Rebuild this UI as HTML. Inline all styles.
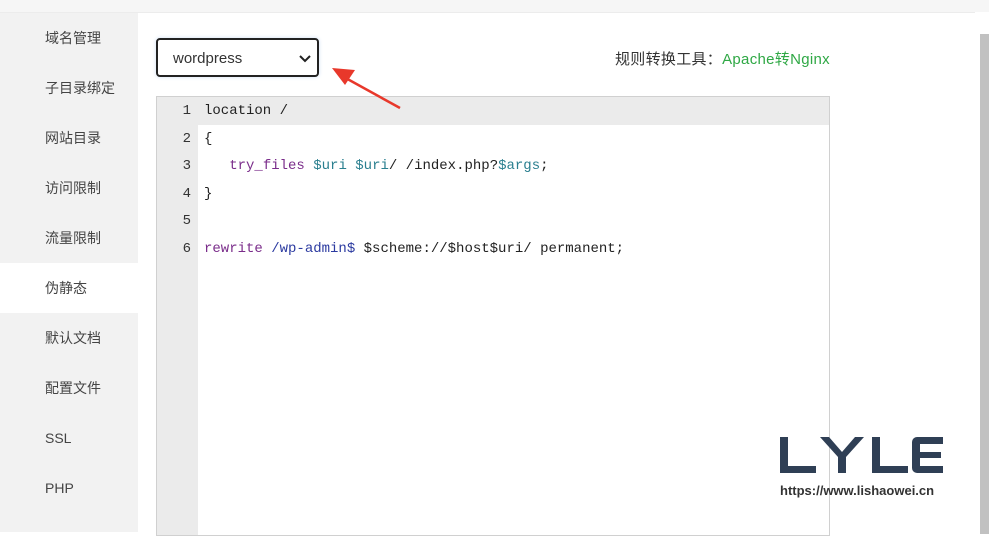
<!DOCTYPE html>
<html><head><meta charset="utf-8"><style>
body{margin:0;width:989px;height:532px;overflow:hidden;background:#fff;font-family:"Liberation Sans","Noto Sans CJK SC",sans-serif;position:relative}
.top{position:absolute;left:0;top:0;width:989px;height:12px;background:#f6f6f6;border-bottom:1px solid #ececec}
.side{position:absolute;left:0;top:13px;width:138px;height:519px;background:#f2f2f2}
.side div{height:50px;line-height:51px;padding-left:45px;font-size:14px;color:#444}
.side .act{background:#fff}
.sel{position:absolute;left:156px;top:38px;width:163px;height:39px;border:2px solid #222;border-radius:4px;box-sizing:border-box;box-shadow:0 0 4px #cfe0f5;font-size:15px;color:#333;line-height:38px;padding-left:15px}
.sel svg{position:absolute;right:6px;top:15px}
.tool{position:absolute;left:615px;top:48px;font-size:15px;color:#333;letter-spacing:0.3px}
.tool span{color:#2fa845}
.ed{position:absolute;left:156px;top:96px;width:674px;height:440px;border:1px solid #d0d0d0;box-sizing:border-box}
.gut{position:absolute;left:0;top:0;width:41px;height:100%;background:#ebebeb}
.hl{position:absolute;left:41px;top:0;right:0;height:28px;background:#ebebeb}
.ln{position:absolute;left:0;width:34px;text-align:right;font:14px "Liberation Mono",monospace;color:#333}
.cd{position:absolute;left:47px;font:14px "Liberation Mono",monospace;color:#222;white-space:pre}
.k{color:#7a2c8a}.v{color:#2a7f8f}.p{color:#2b3aa0}
.sb{position:absolute;left:975px;top:12px;width:14px;height:520px;background:#fff}
.sb div{position:absolute;left:5px;top:22px;width:9px;height:500px;background:#c1c1c1}
</style></head><body>
<div class="top"></div>
<div class="side">
<div>域名管理</div><div>子目录绑定</div><div>网站目录</div><div>访问限制</div><div>流量限制</div><div class="act">伪静态</div><div>默认文档</div><div>配置文件</div><div>SSL</div><div>PHP</div>
</div>
<div class="sel">wordpress<svg width="12" height="8" viewBox="0 0 12 8"><path d="M1 1l5 5 5-5" stroke="#222" stroke-width="2" fill="none"/></svg></div>
<div class="tool">规则转换工具：<span>Apache转Nginx</span></div>
<div class="ed">
<div class="gut"></div><div class="hl"></div>
<div class="ln" style="top:6px">1</div><div class="ln" style="top:34px">2</div><div class="ln" style="top:61px">3</div><div class="ln" style="top:89px">4</div><div class="ln" style="top:116px">5</div><div class="ln" style="top:144px">6</div>
<div class="cd" style="top:6px">location /</div>
<div class="cd" style="top:34px">{</div>
<div class="cd" style="top:61px">   <span class="k">try_files</span> <span class="v">$uri</span> <span class="v">$uri</span>/ /index.php?<span class="v">$args</span>;</div>
<div class="cd" style="top:89px">}</div>
<div class="cd" style="top:144px"><span class="k">rewrite</span> <span class="p">/wp-admin$</span> $scheme://$host$uri/ permanent;</div>
</div>
<svg style="position:absolute;left:328px;top:62px;z-index:5" width="80" height="52"><path d="M72 46L14 14" stroke="#e8382b" stroke-width="2.5"/><path d="M4 6L27 8L17 23Z" fill="#e8382b"/></svg>
<svg style="position:absolute;left:780px;top:437px" width="165" height="38" viewBox="0 0 165 38"><g fill="#2f3f55">
<path d="M0 0h8v29h28v7H0z"/>
<path d="M40 0h9l13 15 13-15h9L66 20v16h-8V20z"/>
<path d="M92 0h8v29h28v7H92z"/>
<path d="M132 5a5 5 0 0 1 5-5h26v7h-23v8h21v6h-21v8h23v7h-26a5 5 0 0 1-5-5z"/>
</g></svg>
<div style="position:absolute;left:780px;top:483px;font-size:13px;font-weight:bold;color:#333">https://www.lishaowei.cn</div>
<div class="sb"><div></div></div>
</body></html>
